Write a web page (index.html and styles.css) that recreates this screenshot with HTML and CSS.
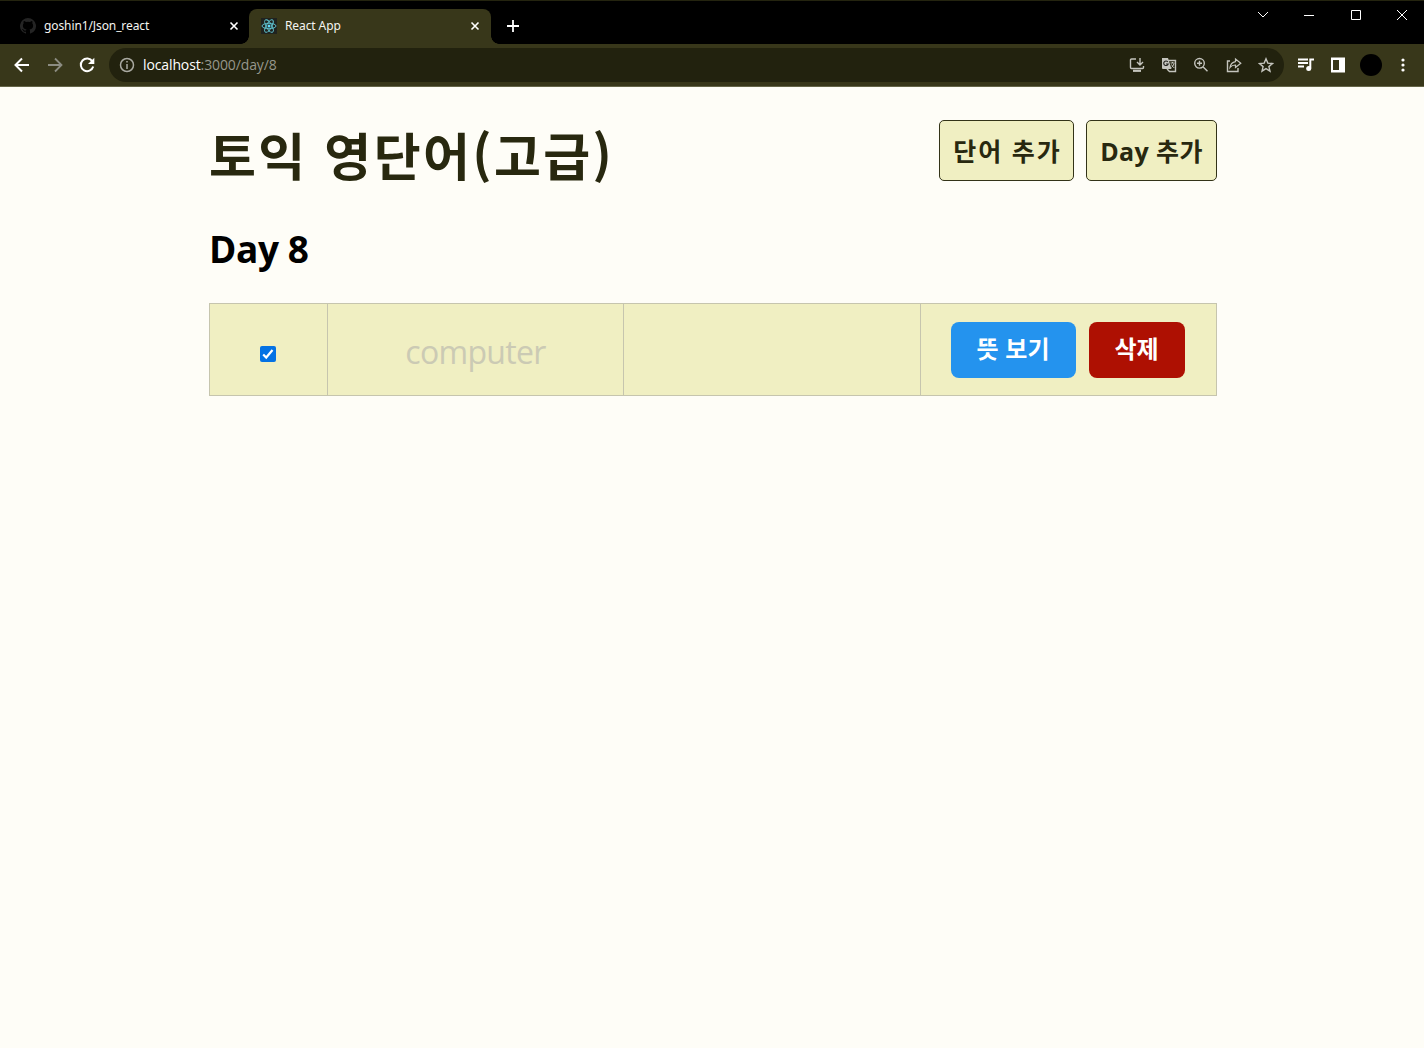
FILE: index.html
```html
<!DOCTYPE html>
<html lang="ko">
<head>
<meta charset="utf-8">
<title>React App</title>
<link rel="stylesheet" href="styles.css">
</head>
<body>
<header class="tabs">
  <div class="tab">
    <svg class="icon" width="16" height="16" viewBox="0 0 16 16" fill="#242424"><path d="M8 0a8 8 0 0 0-2.5 15.6c.4.1.5-.2.5-.4v-1.5c-2 .4-2.600-.5-2.800-1-.1-.3-.5-1-.9-1.200-.3-.2-.7-.6 0-.6.600 0 1.100.6 1.300.8.700 1.200 1.900.9 2.400.7.1-.5.3-.9.500-1.100-1.800-.2-3.600-.9-3.600-3.900 0-.9.300-1.600.8-2.200-.1-.2-.4-1 .1-2.100 0 0 .7-.2 2.200.8a7.600 7.600 0 0 1 4 0c1.500-1 2.200-.8 2.200-.8.400 1.100.2 1.900.1 2.100.5.6.8 1.300.8 2.200 0 3.100-1.900 3.700-3.600 3.900.3.300.5.8.5 1.500v2.400c0 .2.100.5.5.4A8 8 0 0 0 8 0Z"/></svg>
    <span class="tab-title">goshin1/Json_react</span>
    <svg class="close" width="10" height="10" viewBox="0 0 10 10"><path d="M1.500 1.500l7 7m0-7l-7 7"/></svg>
  </div>
  <div class="tab active">
    <svg class="icon" width="16" height="16" viewBox="0 0 16 16"><rect width="16" height="16" fill="#20231f"/><g fill="none" stroke="#61c6d2" stroke-width=".9"><ellipse cx="8" cy="8" rx="7" ry="2.700"/><ellipse cx="8" cy="8" rx="7" ry="2.700" transform="rotate(60 8 8)"/><ellipse cx="8" cy="8" rx="7" ry="2.700" transform="rotate(120 8 8)"/></g><circle cx="8" cy="8" r="1.500" fill="#61dafb"/></svg>
    <span class="tab-title">React App</span>
    <svg class="close" width="10" height="10" viewBox="0 0 10 10"><path d="M1.500 1.500l7 7m0-7l-7 7"/></svg>
  </div>
  <svg class="new-tab" width="14" height="14" viewBox="0 0 14 14"><path d="M7 1v12M1 7h12"/></svg>
  <div class="window-controls">
    <svg width="12" height="12" viewBox="0 0 12 12"><path d="M1 3l5 5 5-5"/></svg>
    <svg width="12" height="12" viewBox="0 0 12 12"><path d="M1 6.500h10"/></svg>
    <svg width="12" height="12" viewBox="0 0 12 12"><path d="M1.500 1.500h9v9h-9z"/></svg>
    <svg width="12" height="12" viewBox="0 0 12 12"><path d="M1 1l10 10m0-10L1 11"/></svg>
  </div>
</header>
<nav class="toolbar">
  <div class="nav-icons">
    <svg width="16" height="16" viewBox="0 0 16 16" fill="none" stroke="#fff" stroke-width="2"><path d="M15 8H2M8 1.500L1.500 8 8 14.500"/></svg>
    <svg width="16" height="16" viewBox="0 0 16 16" fill="none" stroke="#8c8c82" stroke-width="1.800"><path d="M1 8h13M8 1.500L14.500 8 8 14.500"/></svg>
    <svg width="16" height="16" viewBox="0 0 16 16"><path d="M13.400 4.400A6.300 6.300 0 1 0 14.200 9.500" fill="none" stroke="#fff" stroke-width="2"/><path d="M15.300.7v6.300H9z" fill="#fff"/></svg>
  </div>
  <div class="address">
    <svg width="16" height="16" viewBox="0 0 16 16" fill="none" stroke="#aaaaa2" stroke-width="1.500"><circle cx="8" cy="8" r="6.500"/><path d="M8 7v5M8 4v1.600"/></svg>
    <span class="url"><span class="host">localhost</span>:3000/day/8</span>
    <div class="page-actions">
      <svg width="16" height="16" viewBox="0 0 16 16"><path d="M7 2H2.500Q1.500 2 1.500 3v7.500q0 1 1 1h11q1 0 1-1V9M11 1v6M8 5l3 3 3-3"/><path d="M4 13.800h8" stroke-width="2.200"/></svg>
      <svg width="16" height="16" viewBox="0 0 16 16"><path d="M6 3.500h8.500v11H8.500L6 12"/><path d="M1 1h6l3.500 11H2q-1 0-1-1z" fill="#c4c4bd" stroke="none"/><path d="M6.800 4.800A2.300 2.300 0 1 0 7.200 7H5" stroke="#252520" stroke-width="1.100"/><path d="M9.500 6h4M11.500 5v1M13 6.500q-.5 2.500-2.500 4M10.500 7.500q1 2 2.800 3.500" stroke-width="1"/></svg>
      <svg width="16" height="16" viewBox="0 0 16 16"><circle cx="6.500" cy="6.300" r="4.800"/><path d="M10.200 10l4.300 4.300M4 6.300h5M6.500 3.800v5" /></svg>
      <svg width="16" height="16" viewBox="0 0 16 16"><path d="M4 4H1.500v10.500H12V11"/><path d="M9.500 2l5.300 4.200-5.300 4.300V8Q6 7.900 4 10.500 4.700 5.500 9.500 4.600z" stroke-width="1.200"/></svg>
      <svg width="16" height="16" viewBox="0 0 16 16"><path d="M8 1.800l1.800 4.300 4.700.4-3.600 3.100 1.100 4.600L8 11.700l-4 2.500 1.100-4.600-3.600-3.100 4.700-.4z"/></svg>
    </div>
  </div>
  <div class="browser-actions">
    <svg width="18" height="16" viewBox="0 0 18 16"><path d="M1 2.500h10M1 6h10M1 9.500h6" stroke="#fff" stroke-width="1.900"/><path d="M13.300 11.500V2.500h3.700" fill="none" stroke="#fff" stroke-width="2"/><circle cx="11.700" cy="11.600" r="2.500" fill="#fff"/></svg>
    <svg width="16" height="16" viewBox="0 0 16 16"><path fill="#fff" fill-rule="evenodd" d="M1 .5h14v15H1zM3 3v10h6V3z"/></svg>
    <span class="avatar"></span>
    <svg class="more" width="4" height="14" viewBox="0 0 4 14" fill="#fff"><circle cx="2" cy="2" r="1.600"/><circle cx="2" cy="7" r="1.600"/><circle cx="2" cy="12" r="1.600"/></svg>
  </div>
</nav>
<main class="page">
  <div class="page-header">
    <h1>토익 영단어(고급)</h1>
    <div class="menu">
      <a class="link add-word">단어 추가</a>
      <a class="link add-day">Day 추가</a>
    </div>
  </div>
  <h2>Day 8</h2>
  <div class="word-row">
    <div class="cell"><span class="checkbox"><svg width="16" height="16" viewBox="0 0 16 16"><path d="M3.200 8.500l3 3L12.500 4" fill="none" stroke="#fff" stroke-width="2.200"/></svg></span></div>
    <div class="cell word">computer</div>
    <div class="cell"></div>
    <div class="cell actions"><button class="btn show">뜻 보기</button><button class="btn delete">삭제</button></div>
  </div>
</main>
</body>
</html>
```
FILE: styles.css
```css
* { box-sizing: border-box; }
body {
  margin: 0;
  height: 1048px;
  overflow: hidden;
  background: #fefdf7;
  color: #000;
  font-family: "Open Sans", "Noto Sans CJK KR", sans-serif;
}
svg { display: block; flex: none; }

.tabs {
  display: flex;
  height: 44px;
  padding: 8px 0 0 8px;
  background: #000;
  border-top: 1px solid #24240f;
}
.tab {
  position: relative;
  display: flex;
  align-items: center;
  width: 241px;
  height: 35px;
  padding: 0 10px 1px 12px;
  color: #f4f4f0;
  font-family: "Noto Sans", sans-serif;
  font-size: 12px;
}
.tab.active {
  width: 242px;
  padding-left: 12px;
  padding-right: 11px;
  border-radius: 8px 8px 0 0;
  background: #38371a;
}
.tab.active::before,
.tab.active::after {
  content: "";
  position: absolute;
  bottom: 0;
  width: 8px;
  height: 8px;
}
.tab.active::before { left: -8px; background: radial-gradient(circle at 0 0, transparent 7.5px, #38371a 8px); }
.tab.active::after { right: -8px; background: radial-gradient(circle at 100% 0, transparent 7.5px, #38371a 8px); }
.tab-title { flex: 1; margin-left: 8px; padding-bottom: 1px; letter-spacing: -0.1px; white-space: nowrap; }
.close { fill: none; stroke: #fff; stroke-width: 1.6; }
.new-tab { margin: 10px 0 0 15px; fill: none; stroke: #fff; stroke-width: 1.8; }
.window-controls { display: flex; gap: 34.3px; margin: 0 16px 0 auto; }
.window-controls svg { fill: none; stroke: #fff; stroke-width: 1; }

.toolbar {
  display: flex;
  align-items: center;
  height: 43px;
  padding: 0 18px 1px 14px;
  background: #38371a;
  border-bottom: 1px solid #656548;
}
.nav-icons { display: flex; gap: 16.5px; width: 95px; }
.address {
  display: flex;
  align-items: center;
  width: 1175px;
  height: 34px;
  padding: 0 10px;
  border-radius: 17px;
  background: #22220e;
}
.url { margin-left: 8px; color: #96968c; font-size: 14px; line-height: 20px; letter-spacing: -0.12px; }
.host { color: #fff; }
.page-actions { display: flex; gap: 16.3px; margin-left: auto; }
.page-actions svg { fill: none; stroke: #c4c4bd; stroke-width: 1.4; }
.browser-actions { display: flex; flex: 1; align-items: center; padding-left: 13px; }
.browser-actions svg + svg { margin-left: 15px; }
.avatar { width: 22px; height: 22px; margin-left: 14px; border-radius: 50%; background: #000; }
.more { margin-left: 19px; }

.page { width: 1008px; margin: 33px 0 0 209px; }
.page-header { display: flex; justify-content: space-between; height: 61px; }
h1 {
  margin: 0;
  padding-top: 1px;
  color: #28280f;
  font-family: "Noto Sans CJK KR", sans-serif;
  font-size: 51px;
  font-weight: 700;
  line-height: 66px;
  letter-spacing: 2.4px;
  white-space: nowrap;
}
.menu { display: flex; gap: 12px; }
.link {
  display: flex;
  align-items: center;
  justify-content: center;
  height: 61px;
  padding-bottom: 1px;
  border: 1px solid #333318;
  border-radius: 5px;
  background: #f0efc2;
  color: #28280f;
  font-size: 25px;
  font-weight: 700;
  white-space: nowrap;
}
.add-word { width: 135px; padding-left: 2px; letter-spacing: 2px; }
.add-day { width: 131px; letter-spacing: 0.4px; }
h2 { margin: 42px 0 0; font-size: 37px; font-weight: 700; line-height: 52px; letter-spacing: -0.4px; }
.word-row {
  display: grid;
  grid-template-columns: 118px 296px 297px 295px;
  height: 93px;
  margin-top: 28px;
  border: 1px solid #c6c5ae;
  background: #f0efc2;
}
.cell { display: flex; align-items: center; justify-content: center; border-right: 1px solid #c6c5ae; }
.cell:last-child { border-right: 0; }
.checkbox { width: 16px; height: 16px; margin: 8px 1px 0 0; border-radius: 2px; background: #0472e4; }
.word { padding-top: 4px; color: #cbcab4; font-size: 32px; letter-spacing: -0.7px; }
.actions { gap: 13px; padding-right: 2px; }
.btn {
  height: 56px;
  padding: 0 0 4px;
  border: 0;
  border-radius: 8px;
  color: #fff;
  font-family: "Noto Sans CJK KR", sans-serif;
  font-size: 24px;
  font-weight: 700;
}
.show { width: 125px; background: #2493ee; }
.delete { width: 96px; background: #ae1002; }
```
